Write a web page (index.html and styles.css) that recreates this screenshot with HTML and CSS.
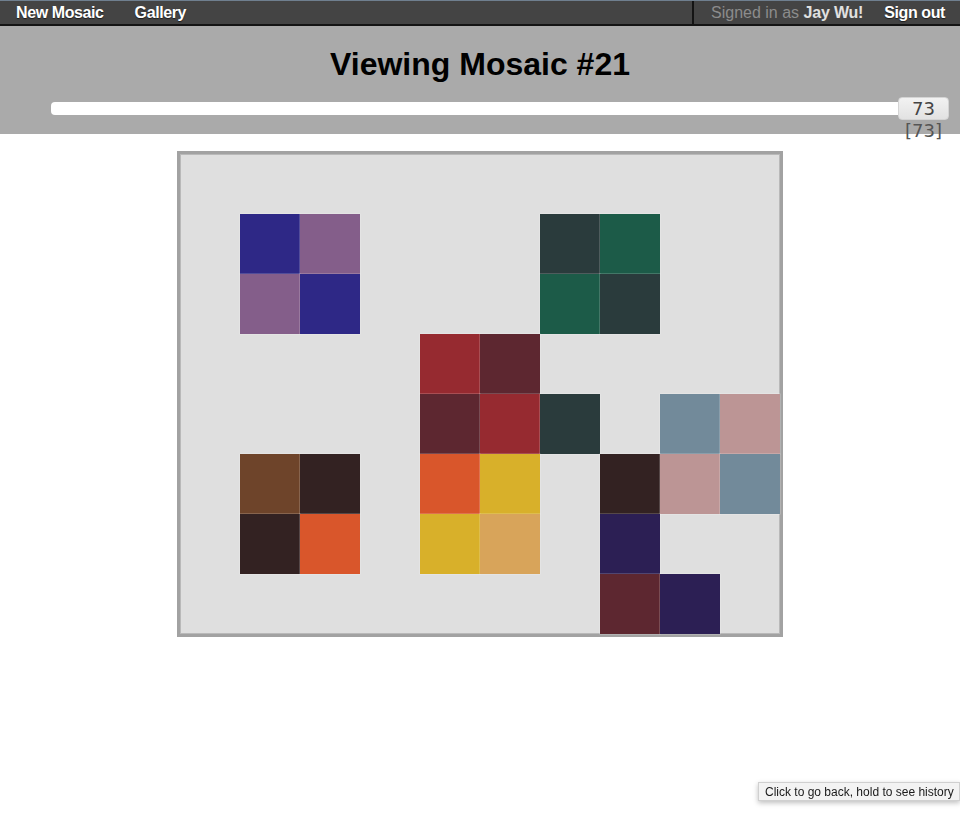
FILE: index.html
```html
<!DOCTYPE html>
<html>
<head>
<meta charset="utf-8">
<title>Viewing Mosaic #21</title>
<link rel="stylesheet" href="styles.css">
</head>
<body>
<nav class="topbar">
  <div class="nav-left">
    <a class="nav-link" href="#">New Mosaic</a>
    <a class="nav-link" href="#">Gallery</a>
  </div>
  <div class="nav-right">
    <span class="signed">Signed in as <b class="user">Jay Wu!</b></span>
    <a class="nav-link" href="#">Sign out</a>
  </div>
</nav>
<header class="head">
  <h1 class="title">Viewing Mosaic #21</h1>
  <div class="slider">
    <div class="track"></div>
    <div class="thumb">73</div>
  </div>
  <div class="value-row"><span class="value">[73]</span></div>
</header>
<main class="stage">
  <div class="mosaic">
    <div class="tile c-navy" style="grid-area:2/2"></div>
    <div class="tile c-mauve" style="grid-area:2/3"></div>
    <div class="tile c-slate" style="grid-area:2/7"></div>
    <div class="tile c-green" style="grid-area:2/8"></div>

    <div class="tile c-mauve" style="grid-area:3/2"></div>
    <div class="tile c-navy" style="grid-area:3/3"></div>
    <div class="tile c-green" style="grid-area:3/7"></div>
    <div class="tile c-slate" style="grid-area:3/8"></div>

    <div class="tile c-red" style="grid-area:4/5"></div>
    <div class="tile c-wine" style="grid-area:4/6"></div>

    <div class="tile c-wine" style="grid-area:5/5"></div>
    <div class="tile c-red" style="grid-area:5/6"></div>
    <div class="tile c-slate" style="grid-area:5/7"></div>
    <div class="tile c-steel" style="grid-area:5/9"></div>
    <div class="tile c-rose" style="grid-area:5/10"></div>

    <div class="tile c-brown" style="grid-area:6/2"></div>
    <div class="tile c-dark" style="grid-area:6/3"></div>
    <div class="tile c-orange" style="grid-area:6/5"></div>
    <div class="tile c-mustard" style="grid-area:6/6"></div>
    <div class="tile c-dark" style="grid-area:6/8"></div>
    <div class="tile c-rose" style="grid-area:6/9"></div>
    <div class="tile c-steel" style="grid-area:6/10"></div>

    <div class="tile c-dark" style="grid-area:7/2"></div>
    <div class="tile c-orange" style="grid-area:7/3"></div>
    <div class="tile c-mustard" style="grid-area:7/5"></div>
    <div class="tile c-sand" style="grid-area:7/6"></div>
    <div class="tile c-indigo" style="grid-area:7/8"></div>

    <div class="tile c-wine" style="grid-area:8/8"></div>
    <div class="tile c-indigo" style="grid-area:8/9"></div>
  </div>
</main>
<div class="tooltip">Click to go back, hold to see history</div>
</body>
</html>
```

FILE: styles.css
```css
html, body {
  margin: 0;
  padding: 0;
  background: #ffffff;
  font-family: "Liberation Sans", Arial, Helvetica, sans-serif;
}

.topbar {
  display: flex;
  align-items: stretch;
  height: 23px;
  background: #444444;
  border-top: 1px solid #6f7f8f;
  border-bottom: 2px solid #141414;
}

.nav-left {
  display: flex;
  align-items: center;
  gap: 31px;
  padding-left: 16px;
}

.nav-link {
  color: #ffffff;
  font-weight: bold;
  font-size: 16px;
  text-decoration: none;
  letter-spacing: -0.4px;
  text-shadow: 0 1px 1px rgba(0, 0, 0, 0.6);
}

.nav-right {
  margin-left: auto;
  display: flex;
  align-items: center;
  gap: 21px;
  padding-left: 17px;
  padding-right: 15px;
  border-left: 2px solid #141414;
}

.signed {
  color: #8c8c8c;
  font-size: 16px;
}

.user {
  color: #e0e0e0;
  font-weight: bold;
  letter-spacing: -0.2px;
}

.head {
  height: 108px;
  background: #aaaaaa;
  padding-top: 20px;
  box-sizing: border-box;
}

.title {
  margin: 0;
  text-align: center;
  font-size: 32px;
  line-height: 37px;
  font-weight: bold;
  color: #000000;
}

.slider {
  display: flex;
  align-items: center;
  margin: 14px 11px 0 51px;
  height: 23px;
}

.track {
  flex: 1;
  height: 13px;
  background: #ffffff;
  border-radius: 4px;
}

.thumb {
  width: 51px;
  height: 23px;
  margin-left: -7px;
  box-sizing: border-box;
  border-radius: 4px;
  border: 1px solid #d4d4d4;
  background: linear-gradient(#f2f2f2, #e2e2e2);
  color: #444444;
  font-family: "DejaVu Sans", sans-serif;
  font-size: 18px;
  line-height: 21px;
  text-align: center;
}

.value-row {
  display: flex;
  justify-content: flex-end;
  padding-right: 11px;
}

.value {
  width: 51px;
  text-align: center;
  color: #555555;
  font-family: "DejaVu Sans", sans-serif;
  font-size: 18px;
  line-height: 22px;
}

.stage {
  display: flex;
  justify-content: center;
  padding-top: 17px;
}

.mosaic {
  display: grid;
  grid-template-columns: repeat(10, 60px);
  grid-template-rows: repeat(8, 60px);
  background: #dfdfdf;
  border: 3px solid #a2a2a2;
  box-shadow: inset 0 0 0 1px #b9b9b9;
}

.tile {
  box-shadow: 0 0 0 0.5px rgba(255, 255, 255, 0.35);
}

.c-navy { background: #2e2886; }
.c-mauve { background: #845e8a; }
.c-slate { background: #2a3b3c; }
.c-green { background: #1c5b48; }
.c-red { background: #962a30; }
.c-wine { background: #5d2730; }
.c-steel { background: #728a9a; }
.c-rose { background: #bc9595; }
.c-brown { background: #6e442a; }
.c-dark { background: #332222; }
.c-orange { background: #d9562b; }
.c-mustard { background: #d8b02a; }
.c-sand { background: #d8a45a; }
.c-indigo { background: #2c1f54; }

.tooltip {
  position: fixed;
  left: 758px;
  top: 782px;
  padding: 0 5px 0 6px;
  height: 19px;
  line-height: 18px;
  box-sizing: border-box;
  background: #f3f3f3;
  border: 1px solid #d0d0d0;
  box-shadow: 0 2px 5px rgba(0, 0, 0, 0.25);
  color: #1a1a1a;
  font-size: 12px;
  white-space: nowrap;
}
```
